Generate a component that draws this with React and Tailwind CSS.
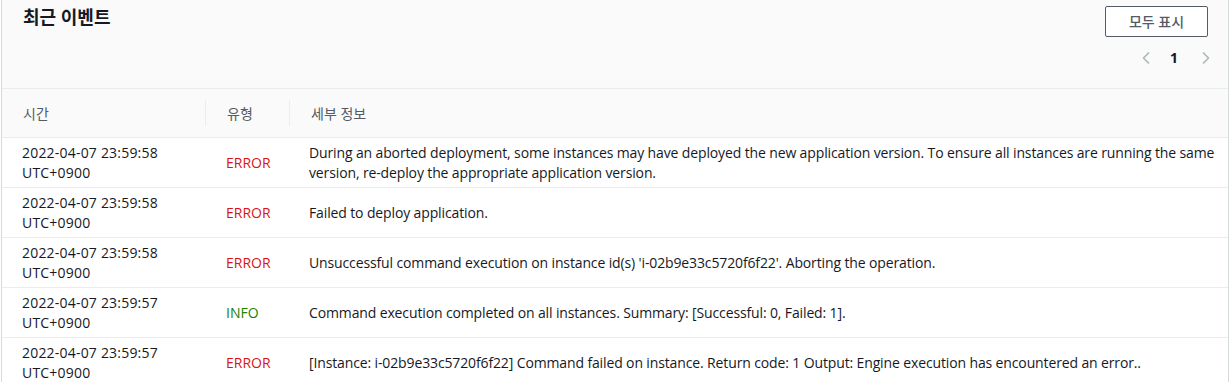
import { ChevronLeft, ChevronRight } from 'lucide-react'

const events = [
  {
    time: '2022-04-07 23:59:58',
    type: 'ERROR',
    detail:
      'During an aborted deployment, some instances may have deployed the new application version. To ensure all instances are running the same version, re-deploy the appropriate application version.',
  },
  { time: '2022-04-07 23:59:58', type: 'ERROR', detail: 'Failed to deploy application.' },
  {
    time: '2022-04-07 23:59:58',
    type: 'ERROR',
    detail: "Unsuccessful command execution on instance id(s) 'i-02b9e33c5720f6f22'. Aborting the operation.",
  },
  {
    time: '2022-04-07 23:59:57',
    type: 'INFO',
    detail: 'Command execution completed on all instances. Summary: [Successful: 0, Failed: 1].',
  },
  {
    time: '2022-04-07 23:59:57',
    type: 'ERROR',
    detail:
      '[Instance: i-02b9e33c5720f6f22] Command failed on instance. Return code: 1 Output: Engine execution has encountered an error..',
  },
]

export default function App() {
  return (
    <div
      className="w-[1230px] h-[382px] overflow-hidden bg-white text-[14px] text-[#16191f]"
      style={{ fontFamily: '"Open Sans", "Noto Sans CJK KR", sans-serif' }}
    >
      <div className="ml-[1px] mr-[1px] border-x border-[#d5dbdb] bg-white">
        {/* Header */}
        <div className="h-[89px] bg-[#fafafa] border-b border-[#eaeded] flex justify-between pl-[21px] pr-[20px]">
          <h2 className="pt-[4px] text-[18px] font-bold leading-[26px]">최근 이벤트</h2>
          <div className="flex flex-col items-end pt-[6px]">
            <button className="h-[31px] w-[103px] border border-[#545b64] rounded-[2px] bg-white text-[14px] text-[#545b64] font-medium">
              모두 표시
            </button>
            <div className="flex items-center gap-[12px] mt-[10px] mr-[-8px]">
              <ChevronLeft className="w-[20px] h-[20px] text-[#aab7b8] -ml-[2px]" strokeWidth={2} />
              <span className="font-bold text-[14px] w-[16px] text-center -translate-x-[2px]">1</span>
              <ChevronRight className="w-[20px] h-[20px] text-[#aab7b8]" strokeWidth={2} />
            </div>
          </div>
        </div>

        {/* Column headers */}
        <div className="h-[49px] bg-[#fafafa] border-b border-[#eaeded] flex items-center text-[#545b64]">
          <div className="w-[204px] pl-[21px] border-r border-[#eaeded] h-[26px] flex items-center">시간</div>
          <div className="w-[84px] pl-[21px] border-r border-[#eaeded] h-[26px] flex items-center">유형</div>
          <div className="pl-[21px] flex items-center">세부 정보</div>
        </div>

        {/* Rows */}
        {events.map((e, i) => (
          <div key={i} className="h-[50px] border-b border-[#eaeded] flex items-center leading-[20px]">
            <div className="w-[204px] pl-[20px] shrink-0 tracking-[0.2px]">
              <div>{e.time}</div>
              <div>UTC+0900</div>
            </div>
            <div
              className={`w-[84px] pl-[20px] shrink-0 ${e.type === 'ERROR' ? 'text-[#d91515]' : 'text-[#1d8102]'}`}
            >
              {e.type}
            </div>
            <div className="pl-[19px] pr-[8px] tracking-[-0.13px]">{e.detail}</div>
          </div>
        ))}
      </div>
    </div>
  )
}
